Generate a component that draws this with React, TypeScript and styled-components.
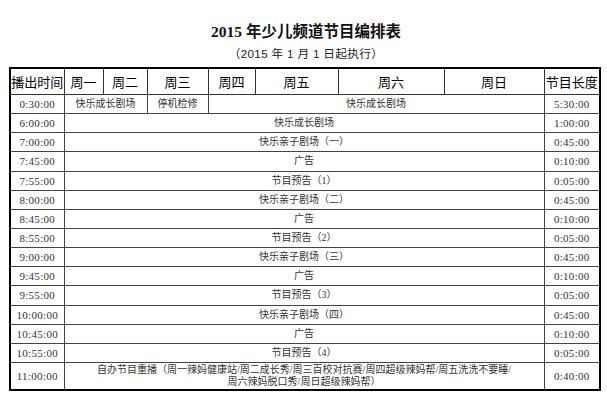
import React from "react";
import styled, { createGlobalStyle } from "styled-components";

const Global = createGlobalStyle`
  html, body { margin: 0; padding: 0; background: #fff; }
  body { font-family: "Liberation Serif", "Noto Sans CJK SC", serif; }
`;

const Page = styled.div`
  width: 607px;
  height: 400px;
  box-sizing: border-box;
  padding: 22px 8px 0 9px;
  display: flex;
  flex-direction: column;
  align-items: stretch;
`;

const Title = styled.h1`
  margin: 0;
  font-family: "Liberation Serif", "Noto Sans CJK SC", serif;
  font-weight: 700;
  font-size: 15.5px;
  line-height: 20px;
  text-align: center;
  color: #111;
  padding-left: 4px;
`;

const Subtitle = styled.div`
  margin-top: 4px;
  font-family: "Liberation Sans", "Noto Sans CJK SC", sans-serif;
  font-size: 11.7px;
  line-height: 16px;
  text-align: center;
  color: #222;
  letter-spacing: 0.3px;
  padding-left: 4px;
`;

const Table = styled.table`
  margin-top: 5px;
  width: 590px;
  table-layout: fixed;
  border-collapse: collapse;
  border: 2px solid #000;
`;

const HeadCell = styled.th`
  height: 25px;
  padding: 0;
  border: 1px solid #333;
  font-family: "Noto Sans CJK SC", sans-serif;
  font-weight: 400;
  font-size: 13px;
  color: #000;
  text-align: center;
  white-space: nowrap;
  overflow: hidden;
`;

const Row = styled.tr<{ $tall?: boolean }>`
  height: ${(p) => (p.$tall ? "28px" : "19.15px")};
`;

const TimeCell = styled.td`
  padding: 0;
  border: 1px solid #444;
  font-family: "Liberation Serif", serif;
  font-size: 11px;
  color: #333;
  text-align: center;
  letter-spacing: 0.3px;
  white-space: nowrap;
`;

const ProgCell = styled.td`
  padding: 0;
  border: 1px solid #444;
  font-family: "Liberation Serif", "Noto Sans CJK SC", serif;
  font-size: 10px;
  line-height: 12px;
  color: #333;
  text-align: center;
  white-space: nowrap;
`;

const widths = [54, 39, 44, 61, 47, 83, 106, 100, 56];
const heads = ["播出时间", "周一", "周二", "周三", "周四", "周五", "周六", "周日", "节目长度"];

const rows: [string, string, string][] = [
  ["6:00:00", "快乐成长剧场", "1:00:00"],
  ["7:00:00", "快乐亲子剧场（一）", "0:45:00"],
  ["7:45:00", "广告", "0:10:00"],
  ["7:55:00", "节目预告（1）", "0:05:00"],
  ["8:00:00", "快乐亲子剧场（二）", "0:45:00"],
  ["8:45:00", "广告", "0:10:00"],
  ["8:55:00", "节目预告（2）", "0:05:00"],
  ["9:00:00", "快乐亲子剧场（三）", "0:45:00"],
  ["9:45:00", "广告", "0:10:00"],
  ["9:55:00", "节目预告（3）", "0:05:00"],
  ["10:00:00", "快乐亲子剧场（四）", "0:45:00"],
  ["10:45:00", "广告", "0:10:00"],
  ["10:55:00", "节目预告（4）", "0:05:00"],
];

export default function App() {
  return (
    <>
      <Global />
      <Page>
        <Title>2015 年少儿频道节目编排表</Title>
        <Subtitle>（2015 年 1 月 1 日起执行）</Subtitle>
        <Table>
          <colgroup>
            {widths.map((w, i) => (
              <col key={i} style={{ width: w }} />
            ))}
          </colgroup>
          <thead>
            <tr>
              {heads.map((h) => (
                <HeadCell key={h}>{h}</HeadCell>
              ))}
            </tr>
          </thead>
          <tbody>
            <Row>
              <TimeCell>0:30:00</TimeCell>
              <ProgCell colSpan={2}>快乐成长剧场</ProgCell>
              <ProgCell>停机检修</ProgCell>
              <ProgCell colSpan={4}>快乐成长剧场</ProgCell>
              <TimeCell>5:30:00</TimeCell>
            </Row>
            {rows.map(([t, p, d]) => (
              <Row key={t}>
                <TimeCell>{t}</TimeCell>
                <ProgCell colSpan={7}>{p}</ProgCell>
                <TimeCell>{d}</TimeCell>
              </Row>
            ))}
            <Row $tall>
              <TimeCell>11:00:00</TimeCell>
              <ProgCell colSpan={7}>
                自办节目重播（周一辣妈健康站/周二成长秀/周三百校对抗赛/周四超级辣妈帮/周五洗洗不要睡/
                <br />
                周六辣妈脱口秀/周日超级辣妈帮）
              </ProgCell>
              <TimeCell>0:40:00</TimeCell>
            </Row>
          </tbody>
        </Table>
      </Page>
    </>
  );
}
